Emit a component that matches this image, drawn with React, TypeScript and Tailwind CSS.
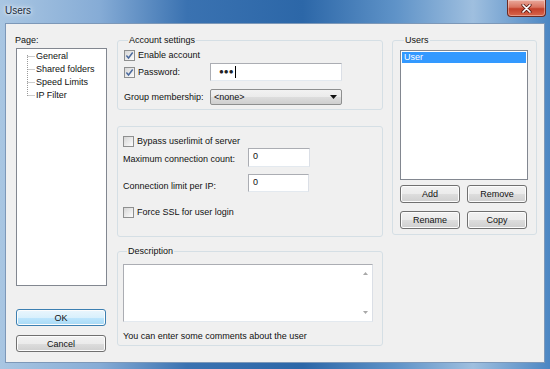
import React from "react";
import clsx from "clsx";

function CheckBox({ checked }: { checked?: boolean }) {
  return (
    <span className="flex h-[11px] w-[11px] shrink-0 items-center justify-center border border-[#8e8f8f] bg-[linear-gradient(135deg,#d6d6d6,#fdfdfd)]">
      {checked && (
        <svg width="9" height="9" viewBox="0 0 9 9">
          <path d="M1.4 4.6 L3.5 7 L7.7 1.5" fill="none" stroke="#4b6a9e" strokeWidth="1.5" />
        </svg>
      )}
    </span>
  );
}

function Btn({ children, className, primary }: { children: React.ReactNode; className?: string; primary?: boolean }) {
  return (
    <div
      className={clsx(
        "flex items-center justify-center rounded-[3px] border shadow-[inset_0_0_0_1px_#fcfcfc]",
        primary
          ? "border-[#3c7fb1] bg-[linear-gradient(to_bottom,#eaf6fd_0%,#d9f0fc_50%,#bee6fd_51%,#a7d9f5_100%)]"
          : "border-[#707070] bg-[linear-gradient(to_bottom,#f2f2f2_0%,#ebebeb_50%,#dddddd_51%,#cfcfcf_100%)]",
        className
      )}
    >
      {children}
    </div>
  );
}

function Group({ title, className, children }: { title?: string; className?: string; children: React.ReactNode }) {
  return (
    <fieldset className={clsx("rounded-[3px] border border-[#d5dfe5]", className)}>
      {title && <legend className="ml-[4px] px-[1px] leading-[12px]">{title}</legend>}
      {children}
    </fieldset>
  );
}

const pages = ["General", "Shared folders", "Speed Limits", "IP Filter"];

export default function App() {
  return (
    <div className="flex h-[369px] w-[550px] flex-col bg-[linear-gradient(to_right,#a9c6e2_0%,#86acd6_18%,#3a72b1_34%,#2c67a8_55%,#5f93c8_72%,#9fbfdf_86%,#4b86c3_100%)] px-[5px] pb-[6px] font-['Liberation_Sans',Arial,sans-serif] text-[9px] leading-[12px] text-[#111]">
      {/* title bar */}
      <div className="flex h-[23px] shrink-0 items-start">
        <span className="mt-[5px] text-[10px] text-[#1b2a3a] [text-shadow:0_0_6px_#ffffff,0_0_3px_#ffffff]">Users</span>
        <div className="ml-auto mr-[-1px] flex h-[17px] w-[39px] items-center justify-center rounded-b-[4px] border border-t-0 border-[#6b2a22] bg-[linear-gradient(to_bottom,#eaa99c_0%,#d9735f_45%,#c3402a_55%,#d9664c_100%)] shadow-[inset_0_0_0_1px_rgba(255,255,255,0.35)]">
          <svg width="11" height="9" viewBox="0 0 11 9">
            <path d="M2 1 L9 8 M9 1 L2 8" stroke="#5a1d16" strokeWidth="3.2" strokeLinecap="round" />
            <path d="M2 1 L9 8 M9 1 L2 8" stroke="#ffffff" strokeWidth="1.7" strokeLinecap="round" />
          </svg>
        </div>
      </div>

      {/* client area */}
      <div className="flex flex-1 border border-[#7d98b8] bg-[#f0f0f0] pl-[9px] pr-[7px] pt-[10px]">
        {/* left column */}
        <div className="flex w-[92px] flex-col">
          <div className="h-[12px]">Page:</div>
          <div className="ml-[1px] mt-[2px] flex h-[238px] w-[91px] border border-[#828790] bg-white pt-[1px]">
            <svg width="19" height="52" viewBox="0 0 19 52" className="shrink-0">
              <g stroke="#9a9a9a" strokeWidth="1" strokeDasharray="1 1" fill="none">
                <path d="M10.5 5 V47" />
                <path d="M10.5 6.5 H18 M10.5 19.5 H18 M10.5 32.5 H18 M10.5 45.5 H18" />
              </g>
            </svg>
            <div className="flex flex-col">
              {pages.map((p) => (
                <div key={p} className="h-[13px] leading-[13px]">
                  {p}
                </div>
              ))}
            </div>
          </div>
          <Btn primary className="ml-[1px] mt-[23px] h-[17px] w-[90px]">
            OK
          </Btn>
          <Btn className="ml-[1px] mt-[9px] h-[17px] w-[90px]">Cancel</Btn>
        </div>

        {/* middle column */}
        <div className="ml-[10px] flex w-[266px] flex-col">
          <Group title="Account settings" className="px-[6px] pb-[4px] pt-[2px]">
            <div className="flex h-[14px] items-center gap-[3px]">
              <CheckBox checked />
              <span>Enable account</span>
            </div>
            <div className="mt-[1px] flex h-[18px] items-center">
              <div className="flex w-[86px] items-center gap-[3px]">
                <CheckBox checked />
                <span>Password:</span>
              </div>
              <div className="flex h-[18px] w-[132px] items-center border border-[#abadb3] border-b-[#e3e9ef] border-r-[#dbdfe6] bg-white pl-[8px]">
                <span className="text-[8px] tracking-[0px] text-[#222]">●●●</span>
                <span className="ml-[1px] h-[12px] w-[1px] bg-black" />
              </div>
            </div>
            <div className="mt-[8px] flex h-[16px] items-center">
              <span className="w-[86px]">Group membership:</span>
              <div className="flex h-[16px] w-[132px] items-center justify-between rounded-[2px] border border-[#8e8f8f] bg-[linear-gradient(to_bottom,#f2f2f2_0%,#ebebeb_50%,#dddddd_51%,#cfcfcf_100%)] pl-[3px] pr-[4px]">
                <span>&lt;none&gt;</span>
                <svg width="7" height="4" viewBox="0 0 7 4">
                  <path d="M0 0 H7 L3.5 4 Z" fill="#111" />
                </svg>
              </div>
            </div>
          </Group>

          <Group className="mt-[16px] px-[5px] pb-[17px] pt-[7px]">
            <div className="flex h-[14px] items-center gap-[3px]">
              <CheckBox />
              <span>Bypass userlimit of server</span>
            </div>
            <div className="flex h-[19px] items-center">
              <span className="mt-[2px] w-[125px]">Maximum connection count:</span>
              <div className="flex h-[19px] w-[62px] items-start border border-[#abadb3] border-b-[#e3e9ef] border-r-[#dbdfe6] bg-white pl-[4px] pt-[1px]">
                0
              </div>
            </div>
            <div className="mt-[7px] flex h-[18px] items-center">
              <span className="mt-[6px] w-[125px]">Connection limit per IP:</span>
              <div className="flex h-[18px] w-[61px] items-start border border-[#abadb3] border-b-[#e3e9ef] border-r-[#dbdfe6] bg-white pl-[4px] pt-[1px]">
                0
              </div>
            </div>
            <div className="mt-[13px] flex h-[14px] items-center gap-[3px]">
              <CheckBox />
              <span>Force SSL for user login</span>
            </div>
          </Group>

          <Group title="Description" className="mt-[8px] px-[5px] pb-[3px]">
            <div className="mt-[7px] flex h-[58px] w-[250px] border border-[#abadb3] border-b-[#e3e9ef] border-r-[#dbdfe6] bg-white">
              <div className="flex-1" />
              <div className="flex w-[14px] flex-col items-center justify-between py-[7px]">
                <svg width="5" height="3" viewBox="0 0 5 3">
                  <path d="M0 3 H5 L2.5 0 Z" fill="#a8a8a8" />
                </svg>
                <svg width="5" height="3" viewBox="0 0 5 3">
                  <path d="M0 0 H5 L2.5 3 Z" fill="#a8a8a8" />
                </svg>
              </div>
            </div>
            <div className="mt-[8px] h-[12px]">You can enter some comments about the user</div>
          </Group>
        </div>

        {/* right column */}
        <div className="ml-[9px] w-[145px]">
          <Group title="Users" className="pb-[5px] pl-[7px]">
            <div className="mt-[4px] h-[130px] w-[128px] border border-[#828790] bg-white p-[1px]">
              <div className="h-[11px] bg-[#3399ff] pl-[2px] leading-[11px] text-white">User</div>
            </div>
            <div className="mt-[5px] flex gap-[7px]">
              <Btn className="h-[18px] w-[60px]">Add</Btn>
              <Btn className="h-[18px] w-[60px]">Remove</Btn>
            </div>
            <div className="mt-[8px] flex gap-[7px]">
              <Btn className="h-[18px] w-[60px]">Rename</Btn>
              <Btn className="h-[18px] w-[60px]">Copy</Btn>
            </div>
          </Group>
        </div>
      </div>
    </div>
  );
}
